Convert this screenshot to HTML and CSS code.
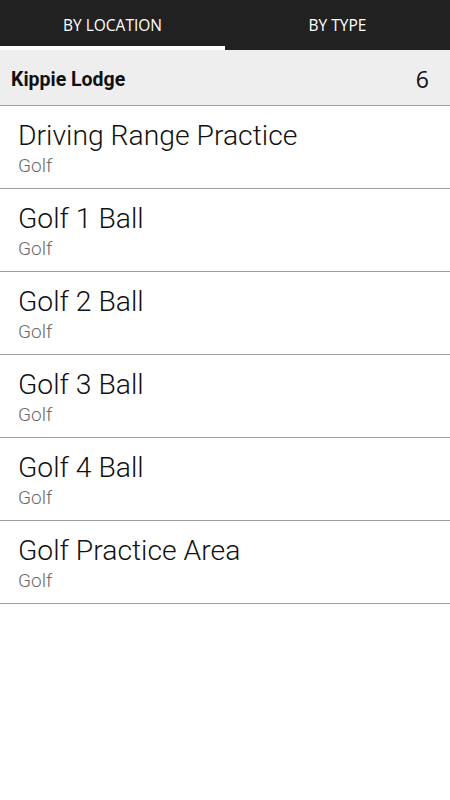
FILE: index.html
```html
<!DOCTYPE html>
<html lang="en">

<head>
    <meta charset="UTF-8">
    <meta name="viewport" content="width=device-width, initial-scale=1.0">
    <title>Facilities</title>
    <link rel="stylesheet" href="styles.css">
</head>

<body>
    <!-- Tabs -->
    <div class="tabs">
        <div class="tab active">BY LOCATION</div>
        <div class="tab">BY TYPE</div>
    </div>

    <!-- Location group -->
    <div class="group-header">
        <span class="group-name">Kippie Lodge</span>
        <span class="group-count">6</span>
    </div>

    <ul class="list">
        <li class="item">
            <div class="item-title">Driving Range Practice</div>
            <div class="item-sub">Golf</div>
        </li>
        <li class="item">
            <div class="item-title">Golf 1 Ball</div>
            <div class="item-sub">Golf</div>
        </li>
        <li class="item">
            <div class="item-title">Golf 2 Ball</div>
            <div class="item-sub">Golf</div>
        </li>
        <li class="item">
            <div class="item-title">Golf 3 Ball</div>
            <div class="item-sub">Golf</div>
        </li>
        <li class="item">
            <div class="item-title">Golf 4 Ball</div>
            <div class="item-sub">Golf</div>
        </li>
        <li class="item">
            <div class="item-title">Golf Practice Area</div>
            <div class="item-sub">Golf</div>
        </li>
    </ul>
</body>

</html>
```

FILE: styles.css
```css
body {
    font-family: Roboto, "Noto Sans", sans-serif;
    background-color: #fff;
    margin: 0;
    padding: 0;
}

.tabs {
    display: flex;
    height: 50px;
    background-color: #212121;
}

.tab {
    flex: 1;
    display: flex;
    align-items: center;
    justify-content: center;
    padding-top: 4px;
    box-sizing: border-box;
    color: #fff;
    font-family: "Open Sans", sans-serif;
    font-size: 15.5px;
    border-bottom: 4px solid transparent;
}

.tab.active {
    border-bottom-color: #fff;
}

.group-header {
    display: flex;
    align-items: center;
    justify-content: space-between;
    height: 56px;
    padding: 3px 21px 0 11px;
    box-sizing: border-box;
    background-color: #eeeeee;
    border-bottom: 1px solid #a0a0a0;
}

.group-name {
    font-weight: bold;
    font-size: 19.5px;
    color: #111;
}

.group-count {
    font-family: "Open Sans", sans-serif;
    font-size: 23px;
    color: #111;
}

.list {
    list-style: none;
    margin: 0;
    padding: 0;
}

.item {
    height: 83px;
    padding: 14px 18px 0;
    box-sizing: border-box;
    border-bottom: 1px solid #a0a0a0;
}

.item-title {
    font-weight: 300;
    font-size: 28.3px;
    line-height: 32px;
    color: #111;
}

.item-sub {
    margin-top: 3px;
    font-weight: 300;
    font-size: 19px;
    line-height: 22px;
    color: #6a6a6a;
}
```
